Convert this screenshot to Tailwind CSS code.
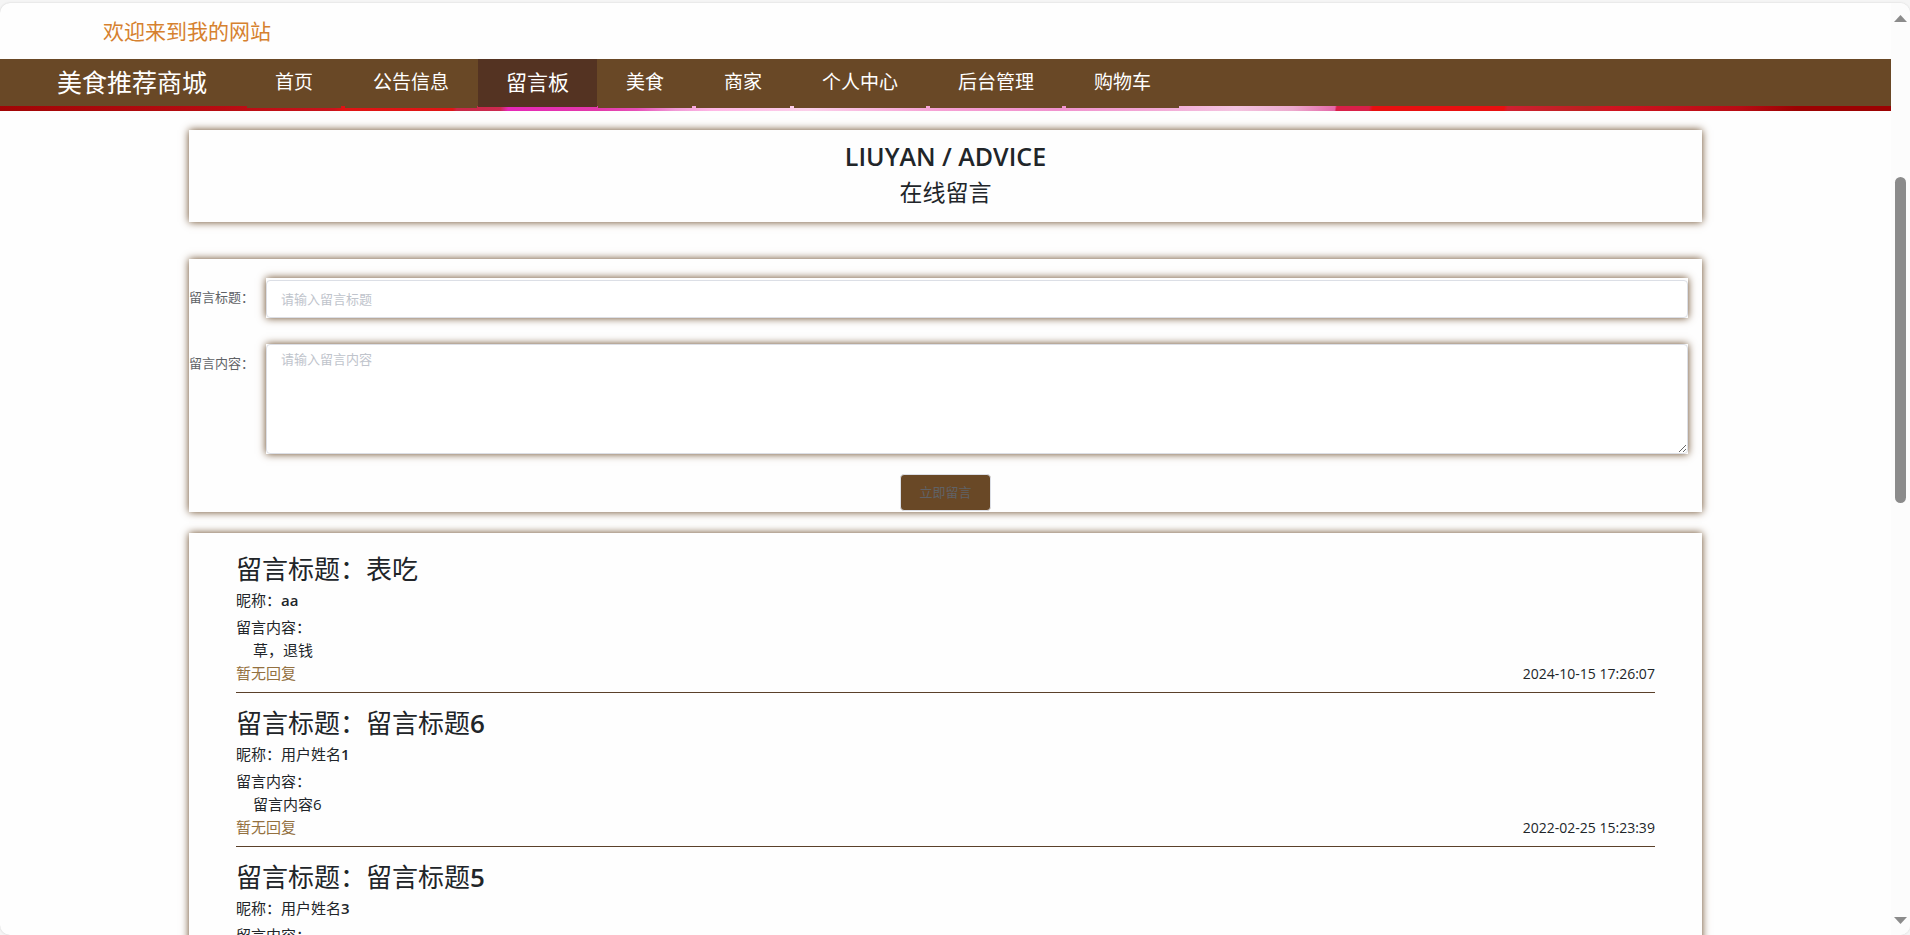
<!DOCTYPE html>
<html lang="zh-CN">
<head>
<meta charset="utf-8">
<title>美食推荐商城 - 留言板</title>
<script src="https://cdn.jsdelivr.net/npm/@tailwindcss/browser@4"></script>
</head>
<body class="h-screen overflow-hidden bg-[#f5f5f5] pt-[3px] font-['Open_Sans','Noto_Sans_CJK_SC',sans-serif] text-[15px] text-[#212529]">
<div class="flex h-full overflow-hidden rounded-[10px] bg-[#fefefe] shadow-[0_0_2px_#cccccc]">
  <div class="h-full min-w-0 flex-1 overflow-hidden">
    <header>
      <p class="flex h-14 items-center pl-[103px] text-[21px] leading-[54px] text-[#d6812f]">欢迎来到我的网站</p>
      <div class="h-[52px] bg-[linear-gradient(100deg,#a00505_0%,#b80c12_12%,#c9141c_18%,#e01414_18.5%,#df1616_24.3%,#c92846_24.5%,#cc2a50_26.8%,#e628b8_27.2%,#e23aaa_32%,#e650b8_34%,#f09ad6_36%,#ffb8e6_38%,#fbd0ea_43%,#f5a0d4_50%,#f092ce_56%,#f2a8d6_61%,#f4c4e0_65.5%,#ecaace_68.5%,#e468a8_70.7%,#d82048_70.8%,#d82048_72.5%,#e81010_72.7%,#e81010_79.6%,#cf2030_79.8%,#bd2020_84%,#d01420_85%,#b80c14_92%,#9c0202_95%,#9c0202_100%)]">
        <nav class="flex h-[47px] items-start bg-[#694826] text-[19px] text-white">
          <a href="#" class="flex h-[47px] w-[247px] shrink-0 items-center pl-[57px] text-[25px]">美食推荐商城</a>
          <ul class="flex gap-1 leading-[46px] whitespace-nowrap">
            <li><a href="#" class="block h-[49px] bg-[#694826] px-7">首页</a></li>
            <li><a href="#" class="block h-[49px] bg-[#694826] px-7">公告信息</a></li>
            <li class="-mx-[3px]"><a href="#" aria-current="page" class="block h-12 bg-[#543322] px-7 text-[21px]">留言板</a></li>
            <li><a href="#" class="block h-[49px] bg-[#694826] px-7">美食</a></li>
            <li><a href="#" class="block h-[49px] bg-[#694826] px-7">商家</a></li>
            <li><a href="#" class="block h-[49px] bg-[#694826] px-7">个人中心</a></li>
            <li><a href="#" class="block h-[49px] bg-[#694826] px-7">后台管理</a></li>
            <li><a href="#" class="block h-[49px] bg-[#694826] px-7">购物车</a></li>
          </ul>
        </nav>
      </div>
    </header>

    <main class="mx-auto w-4/5 pt-[19px]">
      <section class="mb-[37px] pt-2 pb-3 text-center shadow-[0_0_8px_#694826]">
        <h1 class="text-[25px] leading-9 font-semibold">LIUYAN / ADVICE</h1>
        <h2 class="text-[23px] leading-9">在线留言</h2>
      </section>

      <form class="mb-[21px] pt-[19px] pr-3.5 text-[13px] text-[#606266] shadow-[0_0_8px_#694826]">
        <div class="mb-[26px] flex">
          <label for="title" class="w-[77px] shrink-0 leading-[38px]">留言标题：</label>
          <div class="flex-1 pt-0.5 shadow-[0_0_8px_#694826]">
            <input id="title" type="text" placeholder="请输入留言标题" class="block h-[38px] w-full rounded border border-[#dcdfe6] bg-white px-3.5 outline-none placeholder:text-[#c0c4cc]">
          </div>
        </div>
        <div class="mb-5 flex">
          <label for="content" class="w-[77px] shrink-0 leading-[38px]">留言内容：</label>
          <div class="flex-1 shadow-[0_0_8px_#694826]">
            <textarea id="content" placeholder="请输入留言内容" class="block h-[110px] w-full resize rounded border border-[#dcdfe6] bg-white px-3.5 py-1 leading-5 outline-none placeholder:text-[#c0c4cc]"></textarea>
          </div>
        </div>
        <div class="-mr-3.5 flex justify-center pb-px">
          <button type="button" class="h-[37px] rounded border border-[#dcdfe6] bg-[#694826] px-[18px]">立即留言</button>
        </div>
      </form>

      <section class="px-[47px] pt-1.5 pb-6 shadow-[0_0_8px_#694826]">
        <article class="border-b border-[#5a402a] pt-3.5 pb-[7px] leading-[23px]">
          <h3 class="mb-1 text-[26px] leading-8">留言标题：表吃</h3>
          <h4 class="mb-[5px] leading-[22px]">昵称：<span class="font-semibold">aa</span></h4>
          <p>留言内容：</p>
          <p class="pl-[17px]">草，退钱</p>
          <div class="flex justify-between"><span class="text-[#93703f]">暂无回复</span><time class="text-[14px]">2024-10-15 17:26:07</time></div>
        </article>
        <article class="border-b border-[#5a402a] pt-3.5 pb-[7px] leading-[23px]">
          <h3 class="mb-1 text-[26px] leading-8">留言标题：留言标题<span class="font-semibold">6</span></h3>
          <h4 class="mb-[5px] leading-[22px]">昵称：用户姓名<span class="font-semibold">1</span></h4>
          <p>留言内容：</p>
          <p class="pl-[17px]">留言内容6</p>
          <div class="flex justify-between"><span class="text-[#93703f]">暂无回复</span><time class="text-[14px]">2022-02-25 15:23:39</time></div>
        </article>
        <article class="border-b border-[#5a402a] pt-3.5 pb-[7px] leading-[23px]">
          <h3 class="mb-1 text-[26px] leading-8">留言标题：留言标题<span class="font-semibold">5</span></h3>
          <h4 class="mb-[5px] leading-[22px]">昵称：用户姓名<span class="font-semibold">3</span></h4>
          <p>留言内容：</p>
        </article>
      </section>
    </main>
  </div>

  <!-- page scrollbar -->
  <div class="flex w-[19px] shrink-0 flex-col items-center justify-between bg-[#fcfcfc] pt-3 pb-[11px]" aria-hidden="true">
    <svg class="h-[7px] w-[13px]" viewBox="0 0 13 7"><path d="M6.500 0 13 7H0z" fill="#8b8b8b"/></svg>
    <div class="flex w-full flex-1 flex-col items-center">
      <div class="basis-[155px]"></div>
      <div class="w-[11px] basis-[326px] rounded-full bg-[#8b8b8b]"></div>
    </div>
    <svg class="h-[7px] w-[13px]" viewBox="0 0 13 7"><path d="M0 0h13L6.500 7z" fill="#8b8b8b"/></svg>
  </div>
</div>
</body>
</html>
